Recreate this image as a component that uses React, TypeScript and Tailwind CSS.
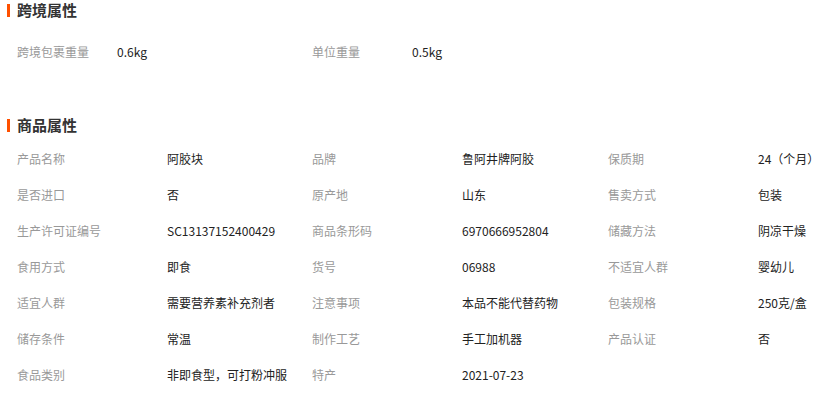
const crossBorder: [string, string][] = [
  ['跨境包裹重量', '0.6kg'],
  ['单位重量', '0.5kg']
]

const goods: [string, string][] = [
  ['产品名称', '阿胶块'],
  ['品牌', '鲁阿井牌阿胶'],
  ['保质期', '24（个月）'],
  ['是否进口', '否'],
  ['原产地', '山东'],
  ['售卖方式', '包装'],
  ['生产许可证编号', 'SC13137152400429'],
  ['商品条形码', '6970666952804'],
  ['储藏方法', '阴凉干燥'],
  ['食用方式', '即食'],
  ['货号', '06988'],
  ['不适宜人群', '婴幼儿'],
  ['适宜人群', '需要营养素补充剂者'],
  ['注意事项', '本品不能代替药物'],
  ['包装规格', '250克/盒'],
  ['储存条件', '常温'],
  ['制作工艺', '手工加机器'],
  ['产品认证', '否'],
  ['食品类别', '非即食型，可打粉冲服'],
  ['特产', '2021-07-23']
]

function Title({ text }: { text: string }): JSX.Element {
  return (
    <div className="flex h-[20px] items-center">
      <span className="ml-[7px] h-[13px] w-[3px] bg-[#ff5000]" />
      <span className="ml-[7px] text-[15px] font-bold leading-[20px] text-[#333]">{text}</span>
    </div>
  )
}

export default function App(): JSX.Element {
  return (
    <div
      className="h-[393px] w-[827px] overflow-hidden bg-white"
      style={{ fontFamily: '"Noto Sans CJK SC", "Liberation Sans", sans-serif' }}
    >
      <Title text="跨境属性" />
      <div className="mt-[14px] grid grid-cols-[295px_295px] pl-[17px]">
        {crossBorder.map(([k, v]) => (
          <div key={k} className="flex h-[36px] items-center text-[12px]">
            <span className="w-[100px] text-[#999]">{k}</span>
            <span className="text-[#222]">{v}</span>
          </div>
        ))}
      </div>

      <div className="mt-[45px]">
        <Title text="商品属性" />
      </div>
      <div className="mt-[6px] grid grid-cols-[295px_296px_220px] pl-[17px]">
        {goods.map(([k, v]) => (
          <div key={k} className="flex h-[36px] items-center text-[12px]">
            <span className="w-[150px] shrink-0 text-[#999]">{k}</span>
            <span className="whitespace-nowrap text-[#222]">{v}</span>
          </div>
        ))}
      </div>
    </div>
  )
}
